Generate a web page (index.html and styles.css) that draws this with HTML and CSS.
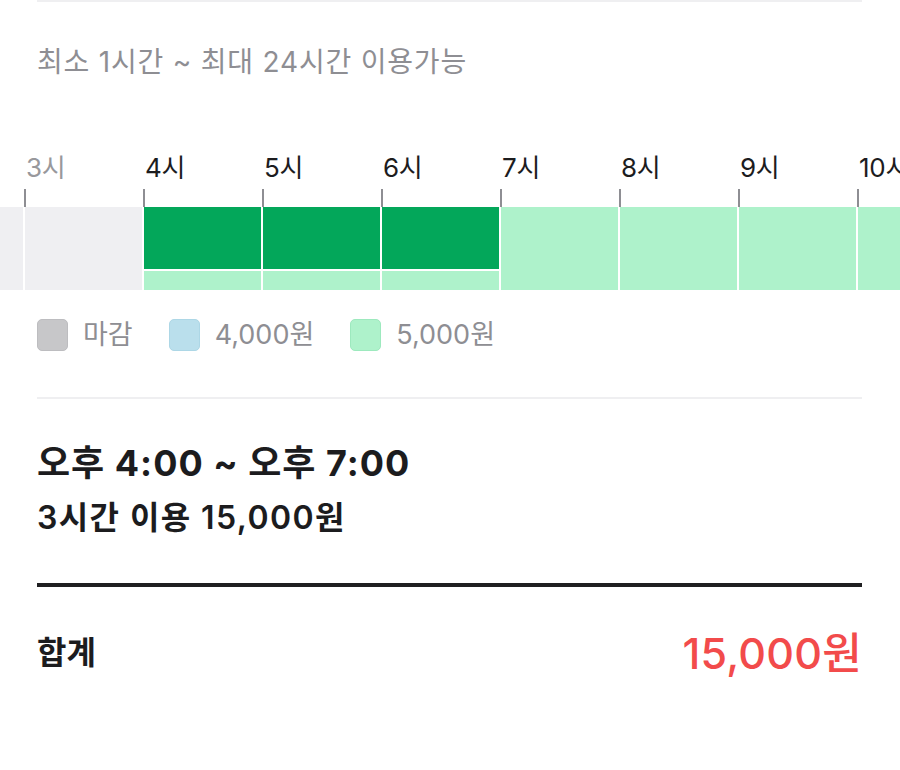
FILE: index.html
```
<!DOCTYPE html>
<html lang="ko">
<head>
  <meta charset="UTF-8">
  <meta name="viewport" content="width=device-width, initial-scale=1.0">
  <title>시간 예약</title>
  <link rel="stylesheet" href="styles.css">
</head>
<body>
  <div class="booking">
    <div class="section top-line">
      <p class="limit">최소 1시간 ~ 최대 24시간 이용가능</p>
    </div>

    <div class="timeline">
      <div class="hours">
        <div class="hour closed">
          <span class="hour-label"></span>
          <div class="hour-tick"></div>
          <div class="hour-cell"></div>
        </div>
        <div class="hour closed">
          <span class="hour-label">3시</span>
          <div class="hour-tick"></div>
          <div class="hour-cell"></div>
        </div>
        <div class="hour selected">
          <span class="hour-label">4시</span>
          <div class="hour-tick"></div>
          <div class="hour-cell"><div class="pick"></div></div>
        </div>
        <div class="hour selected">
          <span class="hour-label">5시</span>
          <div class="hour-tick"></div>
          <div class="hour-cell"><div class="pick"></div></div>
        </div>
        <div class="hour selected">
          <span class="hour-label">6시</span>
          <div class="hour-tick"></div>
          <div class="hour-cell"><div class="pick"></div></div>
        </div>
        <div class="hour">
          <span class="hour-label">7시</span>
          <div class="hour-tick"></div>
          <div class="hour-cell"></div>
        </div>
        <div class="hour">
          <span class="hour-label">8시</span>
          <div class="hour-tick"></div>
          <div class="hour-cell"></div>
        </div>
        <div class="hour">
          <span class="hour-label">9시</span>
          <div class="hour-tick"></div>
          <div class="hour-cell"></div>
        </div>
        <div class="hour">
          <span class="hour-label">10시</span>
          <div class="hour-tick"></div>
          <div class="hour-cell"></div>
        </div>
      </div>
    </div>

    <div class="section">
      <ul class="legend">
        <li><span class="swatch swatch-closed"></span>마감</li>
        <li><span class="swatch swatch-low"></span>4,000원</li>
        <li><span class="swatch swatch-high"></span>5,000원</li>
      </ul>
    </div>

    <div class="section summary">
      <h2 class="summary-time">오후 4:00 ~ 오후 7:00</h2>
      <p class="summary-price">3시간 이용 15,000원</p>
    </div>

    <div class="section total">
      <span class="total-label">합계</span>
      <span class="total-price">15,000원</span>
    </div>
  </div>
</body>
</html>
```

FILE: styles.css
```
body {
  margin: 0;
  padding: 0;
  background-color: #fff;
  color: #1c1c1e;
  font-family: Inter, "Noto Sans CJK KR", sans-serif;
}

.booking {
  width: 900px;
  overflow: hidden;
}

.section {
  margin: 0 38px 0 37px;
}

.top-line {
  border-top: 2px solid #efeff1;
}

.limit {
  margin: 0;
  padding-top: 42px;
  font-size: 28px;
  line-height: 36px;
  color: #8e8e93;
  letter-spacing: 0.8px;
}

/* timeline */
.timeline {
  margin-top: 72px;
  overflow: hidden;
}

.hours {
  display: flex;
  margin-left: -96px;
}

.hour {
  flex: 0 0 119px;
}

.hour-label {
  display: block;
  padding-left: 3px;
  font-size: 26px;
  line-height: 32px;
  height: 32px;
  color: #1c1c1e;
  white-space: nowrap;
  letter-spacing: -0.3px;
}

.hour.closed .hour-label {
  color: #98989c;
}

.hour-tick {
  width: 2px;
  height: 18px;
  margin-top: 5px;
  margin-left: 1px;
  background-color: #8e8e93;
}

.hour-cell {
  height: 83px;
  margin-left: 2px;
  background-color: #aef2cb;
}

.hour.closed .hour-cell {
  background-color: #efeff2;
}

.pick {
  height: 62px;
  border-bottom: 2px solid #fff;
  background-color: #03a75a;
}

/* legend */
.legend {
  list-style: none;
  margin: 0;
  padding: 28px 0 45px;
  display: flex;
  gap: 36px;
  border-bottom: 2px solid #efeff1;
}

.legend li {
  display: flex;
  align-items: center;
  gap: 15px;
  font-size: 27px;
  line-height: 34px;
  color: #8e8e93;
}

.swatch {
  width: 29px;
  height: 30px;
  border-radius: 5px;
  border: 1px solid transparent;
}

.swatch-closed {
  background-color: #c7c7c9;
  border-color: #bdbdc0;
}

.swatch-low {
  background-color: #badfec;
  border-color: #add7e6;
}

.swatch-high {
  background-color: #aef2cb;
  border-color: #9de9be;
}

/* summary */
.summary {
  padding: 42px 0 46px;
  border-bottom: 4px solid #1f1f21;
}

.summary-time {
  margin: 0;
  font-size: 36px;
  line-height: 44px;
  font-weight: 700;
  letter-spacing: 1px;
}

.summary-price {
  margin: 14px 0 0;
  font-size: 32px;
  line-height: 38px;
  font-weight: 600;
  letter-spacing: 1.4px;
}

/* total */
.total {
  display: flex;
  justify-content: space-between;
  align-items: center;
  padding-top: 41px;
  line-height: 50px;
}

.total-label {
  font-size: 32px;
  font-weight: 700;
}

.total-price {
  font-size: 43px;
  font-weight: 500;
  color: #f24b4b;
  letter-spacing: 0.2px;
}
```
